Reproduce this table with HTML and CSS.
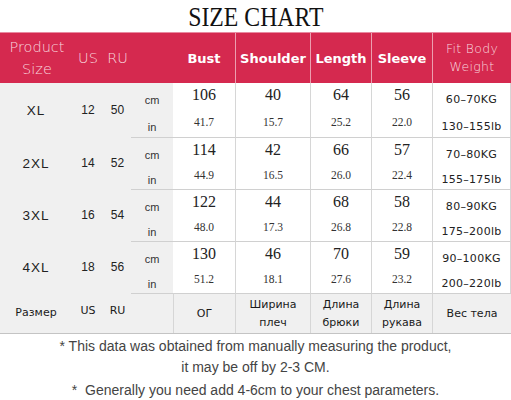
FILE: index.html
```html
<!DOCTYPE html>
<html>
<head>
<meta charset="utf-8">
<title>Size Chart</title>
<link rel="stylesheet" href="styles.css">
</head>
<body>
<div class="page">
  <h1 class="title"><span>SIZE CHART</span></h1>

  <div class="grid head">
    <div class="hc light two"><span>Product<br>Size</span></div>
    <div class="hc light"><span>US</span></div>
    <div class="hc light"><span>RU</span></div>
    <div class="hc"></div>
    <div class="hc bold"><span>Bust</span></div>
    <div class="hc bold sep"><span>Shoulder</span></div>
    <div class="hc bold sep"><span>Length</span></div>
    <div class="hc bold sep"><span>Sleeve</span></div>
    <div class="hc light fitw sep"><span>Fit Body<br>Weight</span></div>
  </div>

  <div class="grid group first">
    <div class="size">XL</div><div class="code">12</div><div class="code">50</div>
    <div class="unit r1">cm</div><div class="num r1">106</div><div class="num r1 sep">40</div><div class="num r1 sep">64</div><div class="num r1 sep">56</div><div class="fit r1 sep">60–70KG</div>
    <div class="unit">in</div><div class="small">41.7</div><div class="small sep">15.7</div><div class="small sep">25.2</div><div class="small sep">22.0</div><div class="fit sep">130–155lb</div>
  </div>

  <div class="grid group">
    <div class="size">2XL</div><div class="code">14</div><div class="code">52</div>
    <div class="unit r1">cm</div><div class="num r1">114</div><div class="num r1 sep">42</div><div class="num r1 sep">66</div><div class="num r1 sep">57</div><div class="fit r1 sep">70–80KG</div>
    <div class="unit">in</div><div class="small">44.9</div><div class="small sep">16.5</div><div class="small sep">26.0</div><div class="small sep">22.4</div><div class="fit sep">155–175lb</div>
  </div>

  <div class="grid group">
    <div class="size">3XL</div><div class="code">16</div><div class="code">54</div>
    <div class="unit r1">cm</div><div class="num r1">122</div><div class="num r1 sep">44</div><div class="num r1 sep">68</div><div class="num r1 sep">58</div><div class="fit r1 sep">80–90KG</div>
    <div class="unit">in</div><div class="small">48.0</div><div class="small sep">17.3</div><div class="small sep">26.8</div><div class="small sep">22.8</div><div class="fit sep">175–200lb</div>
  </div>

  <div class="grid group">
    <div class="size">4XL</div><div class="code">18</div><div class="code">56</div>
    <div class="unit r1">cm</div><div class="num r1">130</div><div class="num r1 sep">46</div><div class="num r1 sep">70</div><div class="num r1 sep">59</div><div class="fit r1 sep">90–100KG</div>
    <div class="unit">in</div><div class="small">51.2</div><div class="small sep">18.1</div><div class="small sep">27.6</div><div class="small sep">23.2</div><div class="fit sep">200–220lb</div>
  </div>

  <div class="grid foot">
    <div class="fc"><span>Размер</span></div>
    <div class="fc code-f"><span>US</span></div>
    <div class="fc code-f"><span>RU</span></div>
    <div class="fc top"></div>
    <div class="fc top sep"><span>ОГ</span></div>
    <div class="fc top sep"><span>Ширина<br>плеч</span></div>
    <div class="fc top sep"><span>Длина<br>брюки</span></div>
    <div class="fc top sep"><span>Длина<br>рукава</span></div>
    <div class="fc top sep"><span>Вес тела</span></div>
  </div>

  <div class="notes">
    <p>* This data was obtained from manually measuring the product,</p>
    <p>it may be off by 2-3 CM.</p>
    <p class="gap">*&nbsp; Generally you need add 4-6cm to your chest parameters.</p>
  </div>
</div>
</body>
</html>
```

FILE: styles.css
```css
* {
  box-sizing: border-box;
  margin: 0;
  padding: 0;
}

body {
  margin: 0;
  background: #fff;
}

.page {
  width: 511px;
}

.title {
  height: 32px;
  padding-top: 3px;
  text-align: center;
  font: normal 27px/29px "Liberation Serif", serif;
  color: #111;
}

.title span {
  display: inline-block;
  transform: scaleX(0.88);
}

.grid {
  display: grid;
  grid-template-columns: 72px 32px 27px 42px 62px 75px 61px 61px 79px;
}

/* header */
.head {
  height: 51px;
  background: #d5294f;
  border-top: 1px solid #e98aa0;
}

.hc {
  display: flex;
  align-items: center;
  justify-content: center;
  text-align: center;
  color: #fff;
}

.hc.sep {
  border-left: 1px solid rgba(255, 255, 255, 0.55);
}

.light {
  font-family: "DejaVu Sans", sans-serif;
  font-weight: 200;
  font-size: 14.5px;
  color: #f8d6de;
}

.two {
  line-height: 22px;
  padding-left: 2px;
}

.fitw {
  font-size: 12.5px;
  line-height: 18px;
  letter-spacing: 0.3px;
}

.bold {
  font-family: "DejaVu Sans", sans-serif;
  font-weight: bold;
  font-size: 13px;
}

/* body groups */
.group {
  grid-template-rows: 26px 26px;
  color: #222;
}

.group.first {
  grid-template-rows: 27px 27px;
}

.size,
.code {
  grid-row: span 2;
  display: flex;
  align-items: center;
  justify-content: center;
  background: #f0f0f0;
  font-family: "Liberation Sans", sans-serif;
}

.size {
  font-size: 13.5px;
  letter-spacing: 1px;
}

.code {
  font-size: 12px;
}

.unit {
  background: #f0f0f0;
  text-align: center;
  font: 11px/14px "Liberation Sans", sans-serif;
  padding-top: 10px;
  color: #333;
}

.num {
  background: #fff;
  text-align: center;
  font: 16px/18px "Liberation Serif", serif;
  padding-top: 3px;
}

.small {
  background: #fff;
  text-align: center;
  font: 11.5px/12px "Liberation Serif", serif;
  padding-top: 6px;
  color: #333;
}

.fit {
  background: #fff;
  text-align: center;
  font: 11px/14px "DejaVu Sans", sans-serif;
  letter-spacing: 0.3px;
  padding-top: 10px;
  border-right: 1px solid #d6d6d6;
}

.group .sep {
  border-left: 1px solid #d6d6d6;
}

.group + .group .r1 {
  border-top: 1px solid #d0d0d0;
}

/* footer */
.foot {
  height: 41px;
  background: #f0f0f0;
  border-bottom: 1px solid #c4c4c4;
}

.fc {
  display: flex;
  align-items: center;
  justify-content: center;
  text-align: center;
  font: 11px/18px "DejaVu Sans", sans-serif;
  color: #1a1a1a;
}

.fc.top {
  border-top: 1px solid #d0d0d0;
}

.fc.sep {
  border-left: 1px solid #d6d6d6;
}

.code-f {
  padding-bottom: 4px;
}

/* notes */
.notes {
  margin-top: 2px;
  text-align: center;
  font: 14px/21px "Liberation Sans", sans-serif;
  color: #444;
}

.notes .gap {
  margin-top: 2px;
}
```
